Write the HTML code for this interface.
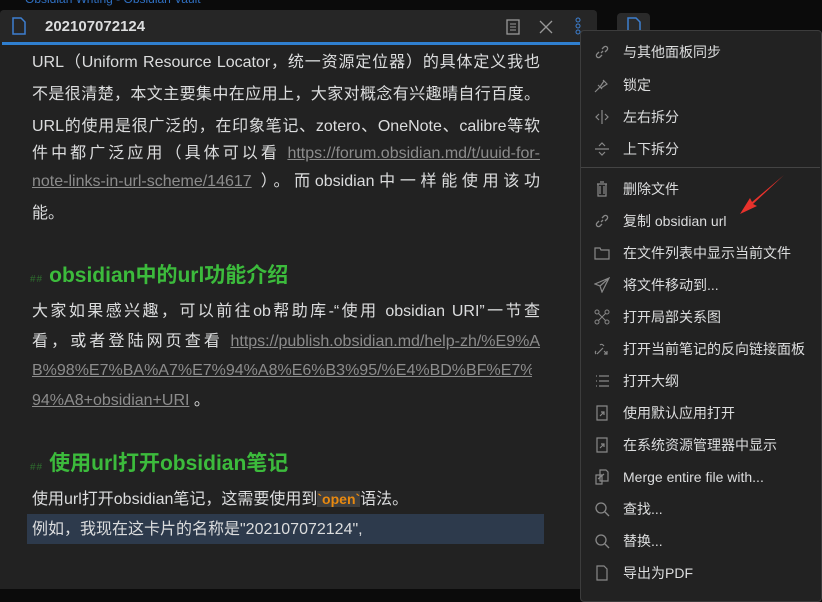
<!DOCTYPE html><html><head><meta charset="utf-8"><style>
body{margin:0;width:822px;height:589px;background:#0b0b0b;overflow:hidden;position:relative;font-family:"Liberation Sans","Noto Sans CJK SC",sans-serif;}
.pane{position:absolute;left:0;top:10px;width:597px;height:579px;background:#222;border-radius:4px 4px 0 0}
.hdr{position:absolute;left:0;top:10px;width:597px;height:32px;background:#262626;border-radius:4px 4px 0 0}
.blue{position:absolute;left:2px;top:42px;width:595px;height:3px;background:#2f7fd0}
.t{position:absolute;left:32px;color:#dcddde;font-size:16px;white-space:nowrap;line-height:20px}
.j{width:508px;text-align:justify;text-align-last:justify;white-space:normal;overflow:hidden;height:22px}
.l{color:#8c8c8c;text-decoration:underline}
.h{position:absolute;left:30px;color:#3cbb3c;font-weight:bold;font-size:21px;white-space:nowrap;line-height:26px}
.h small{color:#2e6e2e;font-size:10px;font-weight:normal;margin-right:6px;letter-spacing:1px}
.menu{position:absolute;left:580px;top:30px;width:240px;height:570px;background:#222;border:1px solid #3c3c3c;border-radius:4px}
.mi{position:absolute;left:623px;color:#dcddde;font-size:14px;white-space:nowrap;line-height:18px}
.ic{position:absolute;left:594px;width:16px;height:16px}
</style></head><body>
<div style="position:absolute;left:25px;top:-8px;color:#2f6fc0;font-size:12px">Obsidian Writing - Obsidian Vault</div>
<div class="pane"></div>
<div class="hdr"></div>
<svg style="position:absolute;left:12px;top:17px" width="14" height="18" viewBox="0 0 14 18"><path d="M1 1h8l4 4v12H1z" fill="none" stroke="#3d7fd0" stroke-width="1.5"/></svg>
<div style="position:absolute;left:45px;top:18px;color:#dcddde;font-weight:bold;font-size:15px">202107072124</div>
<svg style="position:absolute;left:506px;top:19px" width="14" height="16"><rect x="1" y="1" width="12" height="14" fill="none" stroke="#999" stroke-width="1.3"/><path d="M4 5h6M4 8h6M4 11h6" stroke="#999"/></svg>
<svg style="position:absolute;left:539px;top:20px" width="14" height="14"><path d="M1 1l12 12M13 1L1 13" stroke="#999" stroke-width="1.3"/></svg>
<svg style="position:absolute;left:574px;top:17px" width="8" height="18"><circle cx="4" cy="3" r="2" fill="none" stroke="#3d7fd0"/><circle cx="4" cy="9" r="2" fill="none" stroke="#3d7fd0"/><circle cx="4" cy="15" r="2" fill="none" stroke="#3d7fd0"/></svg>
<div class="blue"></div>
<div style="position:absolute;left:617px;top:13px;width:33px;height:28px;background:#2a2a2a;border-radius:4px"></div>
<svg style="position:absolute;left:627px;top:17px" width="14" height="18"><path d="M1 1h8l4 4v12H1z" fill="none" stroke="#3d7fd0" stroke-width="1.5"/></svg>
<div style="position:absolute;left:815px;top:145px;width:7px;height:20px;background:#333"></div>
<div style="position:absolute;left:815px;top:375px;width:7px;height:30px;background:#111"></div>

<div class="t j" style="top:53px">URL（Uniform Resource Locator，统一资源定位器）的具体定义我也</div>
<div class="t j" style="top:85px">不是很清楚，本文主要集中在应用上，大家对概念有兴趣晴自行百度。</div>
<div class="t j" style="top:117px">URL的使用是很广泛的，在印象笔记、zotero、OneNote、calibre等软</div>
<div class="t j" style="top:144px">件中都广泛应用（具体可以看 <span class="l">https://forum.obsidian.md/t/uuid-for-</span></div>
<div class="t j" style="top:172px"><span class="l">note-links-in-url-scheme/14617</span> ）。而obsidian中一样能使用该功</div>
<div class="t" style="top:204px">能。</div>
<div class="h" style="top:263px"><small>##</small>obsidian中的url功能介绍</div>
<div class="t j" style="top:302px">大家如果感兴趣，可以前往ob帮助库-“使用 obsidian URI”一节查</div>
<div class="t j" style="top:332px">看，或者登陆网页查看 <span class="l">https://publish.obsidian.md/help-zh/%E9%A</span></div>
<div class="t j" style="top:361px;width:500px"><span class="l">B%98%E7%BA%A7%E7%94%A8%E6%B3%95/%E4%BD%BF%E7%</span></div>
<div class="t" style="top:391px"><span class="l">94%A8+obsidian+URI</span> 。</div>
<div class="h" style="top:451px"><small>##</small>使用url打开obsidian笔记</div>
<div class="t" style="top:489px">使用url打开obsidian笔记，这需要使用到<span style="background:#3f3f3f;color:#e8890f;font-weight:bold;font-size:14px">`open`</span>语法。</div>
<div style="position:absolute;left:27px;top:514px;width:517px;height:30px;background:#2d3a4c"></div>
<div class="t" style="top:520px">例如，我现在这卡片的名称是"202107072124",</div>

<div class="menu"></div>
<svg class="ic" style="top:44px" viewBox="0 0 16 16"><path d="M7 9l2-2M5 8l-2 2a2 2 0 003 3l2-2M11 8l2-2a2 2 0 00-3-3L8 5" fill="none" stroke="#888" stroke-width="1.3"/></svg>
<div class="mi" style="top:43px">与其他面板同步</div>
<svg class="ic" style="top:77px" viewBox="0 0 16 16"><path d="M1 15l5-5M4 8l4 4M6 10l4-6 3 3-6 4M9 3l4 4" fill="none" stroke="#888" stroke-width="1.2"/></svg>
<div class="mi" style="top:76px">锁定</div>
<svg class="ic" style="top:109px" viewBox="0 0 16 16"><path d="M8 1v14M5 5L2 8l3 3M11 5l3 3-3 3" fill="none" stroke="#888" stroke-width="1.2"/></svg>
<div class="mi" style="top:108px">左右拆分</div>
<svg class="ic" style="top:141px" viewBox="0 0 16 16"><path d="M1 8h14M5 5l3-3 3 3M5 11l3 3 3-3" fill="none" stroke="#888" stroke-width="1.2"/></svg>
<div class="mi" style="top:140px">上下拆分</div>
<div style="position:absolute;left:581px;top:167px;width:239px;height:1px;background:#444"></div>
<svg class="ic" style="top:181px" viewBox="0 0 16 16"><path d="M4 3h8v12H4zM3 3h10M6 1h4M6 5v8M10 5v8" fill="none" stroke="#888" stroke-width="1.2"/></svg>
<div class="mi" style="top:180px">删除文件</div>
<svg class="ic" style="top:213px" viewBox="0 0 16 16"><path d="M7 9l2-2M5 8l-2 2a2 2 0 003 3l2-2M11 8l2-2a2 2 0 00-3-3L8 5" fill="none" stroke="#888" stroke-width="1.3"/></svg>
<div class="mi" style="top:212px">复制 obsidian url</div>
<svg class="ic" style="top:245px" viewBox="0 0 16 16"><path d="M1 3h5l1 2h8v9H1z" fill="none" stroke="#888" stroke-width="1.2"/></svg>
<div class="mi" style="top:244px">在文件列表中显示当前文件</div>
<svg class="ic" style="top:277px" viewBox="0 0 16 16"><path d="M15 1L1 7l5 2 2 6zM6 9l9-8" fill="none" stroke="#888" stroke-width="1.2"/></svg>
<div class="mi" style="top:276px">将文件移动到...</div>
<svg class="ic" style="top:309px" viewBox="0 0 16 16"><circle cx="3" cy="3" r="2" fill="none" stroke="#888"/><circle cx="13" cy="3" r="2" fill="none" stroke="#888"/><circle cx="3" cy="13" r="2" fill="none" stroke="#888"/><circle cx="13" cy="13" r="2" fill="none" stroke="#888"/><path d="M4.5 4.5l7 7M11.5 4.5l-7 7" stroke="#888"/></svg>
<div class="mi" style="top:308px">打开局部关系图</div>
<svg class="ic" style="top:341px" viewBox="0 0 16 16"><path d="M3 13l6-6M6 4a2 2 0 013 0l1 1M2 10a2 2 0 000 3M10 10l3 3M13 10v3h-3" fill="none" stroke="#888" stroke-width="1.2"/></svg>
<div class="mi" style="top:340px">打开当前笔记的反向链接面板</div>
<svg class="ic" style="top:373px" viewBox="0 0 16 16"><path d="M2 3h1M2 8h1M2 13h1M5 3h10M5 8h10M5 13h10" stroke="#888" stroke-width="1.2"/></svg>
<div class="mi" style="top:372px">打开大纲</div>
<svg class="ic" style="top:405px" viewBox="0 0 16 16"><path d="M3 1h10v14H3zM6 11l4-4M7 7h3v3" fill="none" stroke="#888" stroke-width="1.2"/></svg>
<div class="mi" style="top:404px">使用默认应用打开</div>
<svg class="ic" style="top:437px" viewBox="0 0 16 16"><path d="M3 1h10v14H3zM6 11l4-4M7 7h3v3" fill="none" stroke="#888" stroke-width="1.2"/></svg>
<div class="mi" style="top:436px">在系统资源管理器中显示</div>
<svg class="ic" style="top:469px" viewBox="0 0 16 16"><path d="M6 1h6l2 2v9H6zM2 6h6v9H2zM4 10l6-5" fill="none" stroke="#888" stroke-width="1.2"/></svg>
<div class="mi" style="top:468px">Merge entire file with...</div>
<svg class="ic" style="top:501px" viewBox="0 0 16 16"><circle cx="7" cy="7" r="5" fill="none" stroke="#888" stroke-width="1.3"/><path d="M11 11l4 4" stroke="#888" stroke-width="1.3"/></svg>
<div class="mi" style="top:500px">查找...</div>
<svg class="ic" style="top:533px" viewBox="0 0 16 16"><circle cx="7" cy="7" r="5" fill="none" stroke="#888" stroke-width="1.3"/><path d="M11 11l4 4" stroke="#888" stroke-width="1.3"/></svg>
<div class="mi" style="top:532px">替换...</div>
<svg class="ic" style="top:565px" viewBox="0 0 16 16"><path d="M3 1h7l3 3v11H3z" fill="none" stroke="#888" stroke-width="1.2"/></svg>
<div class="mi" style="top:564px">导出为PDF</div>
<svg style="position:absolute;left:735px;top:172px" width="52" height="46"><path d="M49 3L17 30l-2-4-10 16 17-8-4-2z" fill="#e8322c"/></svg>
</body></html>
